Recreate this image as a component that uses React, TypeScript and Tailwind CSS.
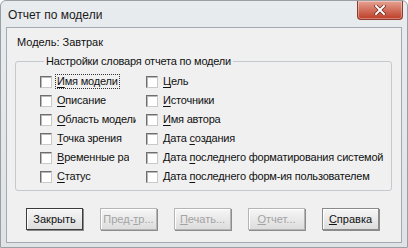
import type { ReactNode } from "react";

type Item = { pre?: string; key: string; rest: string; w?: string; focus?: boolean };

const col1: Item[] = [
  { key: "И", rest: "мя модели", focus: true },
  { key: "О", rest: "писание" },
  { key: "О", rest: "бласть модели", w: "w-[80px]" },
  { key: "Т", rest: "очка зрения" },
  { key: "В", rest: "ременные рамки", w: "w-[73px]" },
  { key: "С", rest: "татус" },
];

const col2: Item[] = [
  { key: "Ц", rest: "ель" },
  { key: "И", rest: "сточники" },
  { key: "И", rest: "мя автора" },
  { pre: "Дата ", key: "с", rest: "оздания" },
  { pre: "Дата ", key: "п", rest: "оследнего форматирования системой" },
  { pre: "Дата ", key: "п", rest: "оследнего форм-ия пользователем" },
];

function Check({ item }: { item: Item }) {
  return (
    <div className="flex h-[19px] items-center">
      <span className="h-[12px] w-[12px] shrink-0 border border-t-[#6e6e6e] border-l-[#6e6e6e] border-r-[#c9c9c9] border-b-[#c9c9c9] bg-white shadow-[inset_1px_1px_0_#b8b8b8]" />
      <span
        className={`ml-[4px] overflow-hidden whitespace-nowrap px-[1px] leading-[13px] ${item.w ?? ""} ${
          item.focus ? "outline outline-1 outline-dotted outline-[#333]" : ""
        }`}
      >
        {item.pre}
        <span className="underline underline-offset-[2px]">{item.key}</span>
        {item.rest}
      </span>
    </div>
  );
}

function Btn({ children, disabled, primary }: { children: ReactNode; disabled?: boolean; primary?: boolean }) {
  return (
    <div
      className={`flex h-[22px] w-[57px] items-center justify-center border bg-gradient-to-b from-[#f6f6f6] to-[#dddddd] shadow-[inset_1px_1px_0_#ffffff,1px_1px_0_#8c8c8c] ${
        primary ? "border-[#3c3c3c] text-[#111]" : disabled ? "border-[#b5b5b5] text-[#a3a3a3]" : "border-[#8a8a8a] text-[#111]"
      }`}
    >
      {children}
    </div>
  );
}

export default function App() {
  return (
    <div className="h-[248px] w-[408px] overflow-hidden bg-white">
      <div className="flex h-[248px] w-[408px] flex-col rounded-t-[6px] border border-[#9a9fa4] bg-gradient-to-b from-[#e9ecee] to-[#dfe3e6]">
        <div className="flex h-[26px] shrink-0 items-start justify-between">
          <span className="pl-[7px] pt-[7px] text-[12px] leading-[15px] text-[#1a1a1a] [font-family:'Liberation_Sans',sans-serif]">
            Отчет по модели
          </span>
          <div className="mr-[4px] flex h-[19px] w-[46px] items-center justify-center rounded-b-[4px] border border-t-0 border-[#8e3a2c] bg-gradient-to-b from-[#e6a293] via-[#d16f5c] to-[#bd3a24] shadow-[inset_0_0_0_1px_rgba(255,255,255,0.35)]">
            <svg width="12" height="10" viewBox="0 0 12 10">
              <path d="M2 1 L10 9 M10 1 L2 9" stroke="#5a1d14" strokeWidth="3.2" strokeLinecap="square" />
              <path d="M2 1 L10 9 M10 1 L2 9" stroke="#ffffff" strokeWidth="2" strokeLinecap="square" />
            </svg>
          </div>
        </div>
        <div className="mx-[5px] mb-[4px] flex flex-1 flex-col border border-[#a3aab2] bg-[#f0f0f0] pt-[8px] text-[11px] text-[#111] [font-family:'Liberation_Sans',sans-serif]">
          <div className="pl-[10px] leading-[13px]">Модель: Завтрак</div>
          <fieldset className="ml-[8px] mr-[9px] mt-[6px] h-[136px] rounded-[3px] border border-[#c3c9ce] pl-[24px] pt-[4px] tracking-[-0.2px]">
            <legend className="ml-[4px] px-[2px] leading-[13px]">Настройки словаря отчета по модели</legend>
            <div className="grid grid-cols-[106px_1fr]">
              <div className="flex flex-col">
                {col1.map((it, i) => (
                  <Check key={i} item={it} />
                ))}
              </div>
              <div className="flex flex-col">
                {col2.map((it, i) => (
                  <Check key={i} item={it} />
                ))}
              </div>
            </div>
          </fieldset>
          <div className="mt-[17px] flex gap-[17px] pl-[19px]">
            <Btn primary>Закрыть</Btn>
            <Btn disabled>
              Пред-<span className="underline">т</span>р...
            </Btn>
            <Btn disabled>
              <span className="underline">П</span>ечать...
            </Btn>
            <Btn disabled>
              <span className="underline">О</span>тчет...
            </Btn>
            <Btn>
              <span className="underline">С</span>правка
            </Btn>
          </div>
        </div>
      </div>
    </div>
  );
}
